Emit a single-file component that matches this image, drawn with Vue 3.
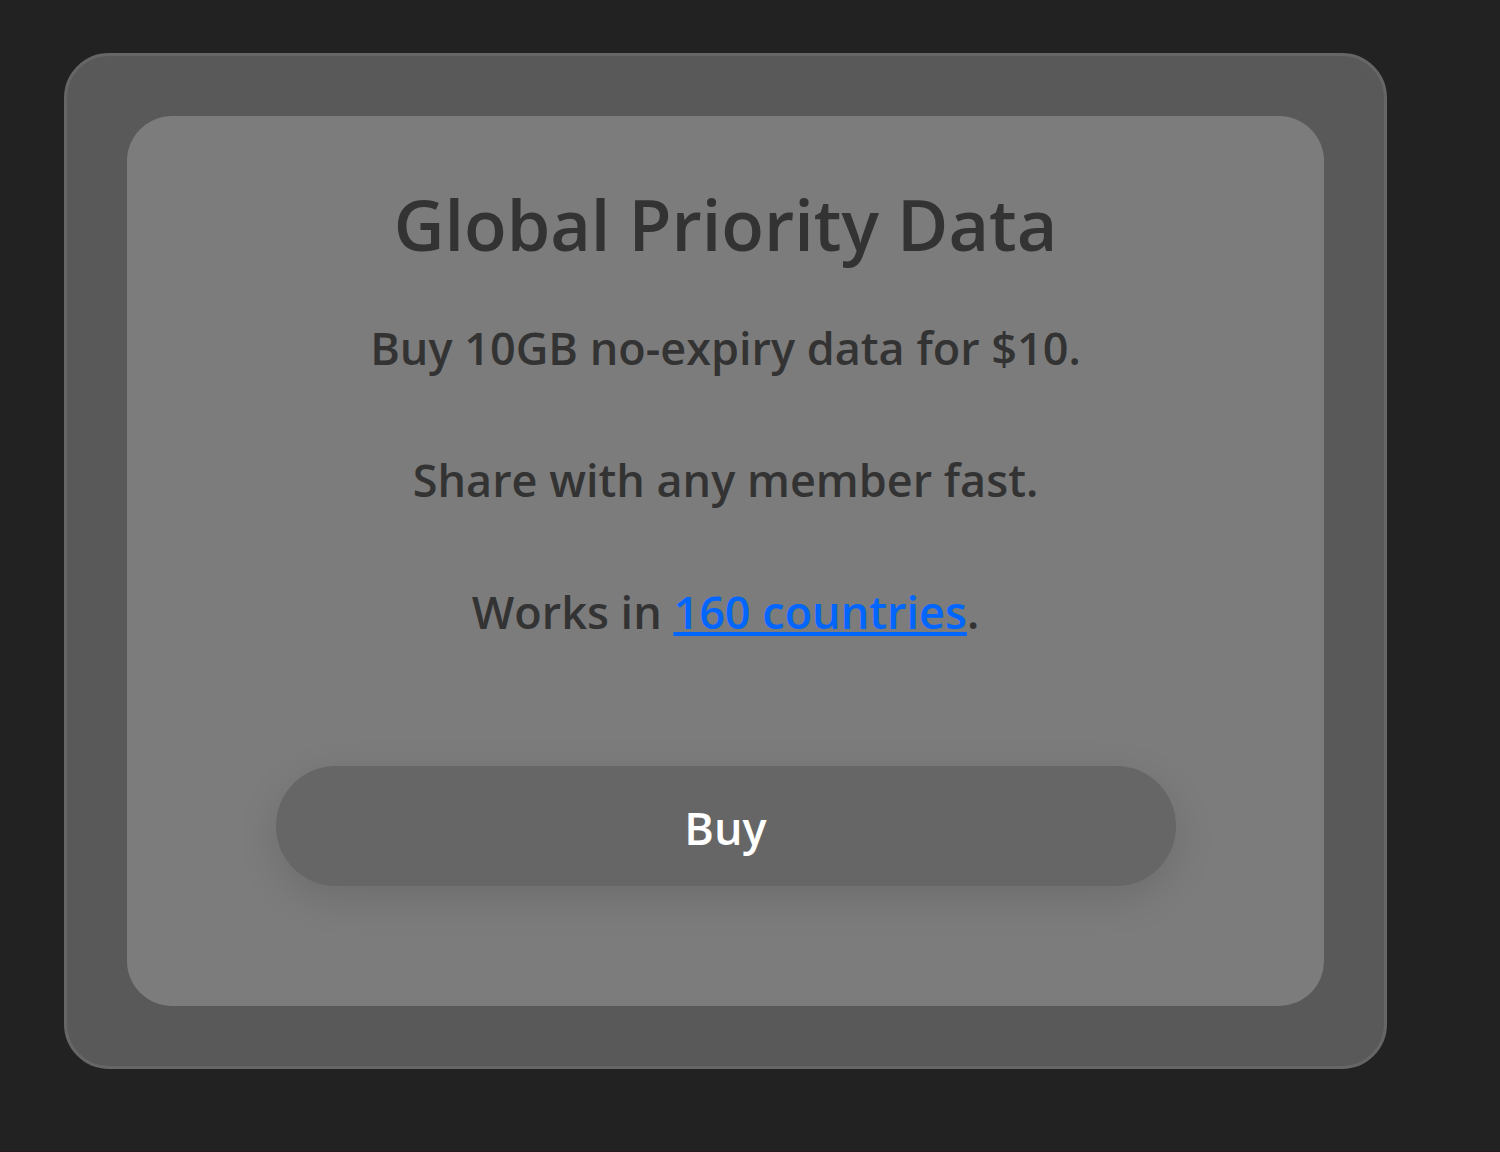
<script setup>
const plan = {
  title: 'Global Priority Data',
  lines: ['Buy 10GB no-expiry data for $10.', 'Share with any member fast.'],
}
</script>

<template>
  <main class="page">
    <section class="frame">
      <div class="card">
        <h1 class="title">{{ plan.title }}</h1>
        <p v-for="line in plan.lines" :key="line" class="line">{{ line }}</p>
        <p class="line">Works in <a class="link" href="#countries">160 countries</a>.</p>
        <button class="buy" type="button">Buy</button>
      </div>
    </section>
  </main>
</template>

<style>
body {
  margin: 0;
  background: #222222;
}
</style>

<style scoped>
.page {
  box-sizing: border-box;
  min-height: 100vh;
  padding: 53px 113px 80px 64px;
  border-bottom: 1px solid #241a1e;
  font-family: "Segoe UI", "Open Sans", "Noto Sans", sans-serif;
  color: #333333;
}

.frame {
  padding: 60px;
  border: 3px solid #666666;
  border-radius: 45px;
  background: #595959;
}

.card {
  display: flex;
  flex-direction: column;
  align-items: center;
  padding: 60px 60px 120px;
  border-radius: 45px;
  background: #7c7c7c;
  text-align: center;
}

.title {
  margin: 0 0 40px;
  font-size: 70px;
  font-weight: 600;
  line-height: 96px;
}

.line {
  margin: 0 0 60px;
  font-size: 45px;
  font-weight: 600;
  line-height: 72px;
}

.link {
  color: #0066ff;
  text-decoration-thickness: 4px;
  text-underline-offset: 3px;
  text-decoration-skip-ink: none;
}

.buy {
  width: 900px;
  max-width: 100%;
  height: 120px;
  margin-top: 58px;
  padding: 4px 0 0;
  border: 0;
  border-radius: 60px;
  background: #666666;
  box-shadow: 0 12px 42px rgba(0, 0, 0, 0.12);
  color: #ffffff;
  font-family: inherit;
  font-size: 45px;
  font-weight: 600;
  line-height: 72px;
}
</style>
